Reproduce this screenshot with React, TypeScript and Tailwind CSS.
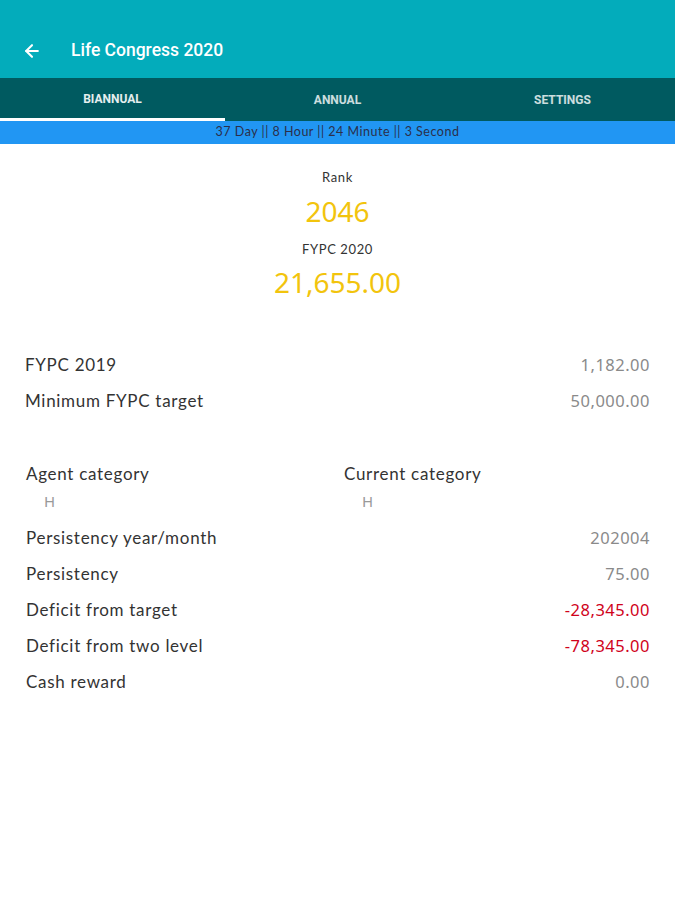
import { ArrowLeft } from 'lucide-react';

const rows1 = [
  { label: 'FYPC 2019', value: '1,182.00' },
  { label: 'Minimum FYPC target', value: '50,000.00' },
];

const rows2 = [
  { label: 'Persistency year/month', value: '202004' },
  { label: 'Persistency', value: '75.00' },
  { label: 'Deficit from target', value: '-28,345.00', red: true },
  { label: 'Deficit from two level', value: '-78,345.00', red: true },
  { label: 'Cash reward', value: '0.00' },
];

const labelFont = "font-['Lato','Open_Sans',sans-serif]";
const numFont = "font-['Noto_Sans','Open_Sans',sans-serif]";

const Row = ({ label, value, red }: { label: string; value: string; red?: boolean }) => (
  <div className="flex items-center justify-between h-9">
    <span className={`${labelFont} text-[17px] tracking-[0.7px] text-[#333]`}>{label}</span>
    <span className={`${numFont} text-[16.5px] tracking-[0.5px] ${red ? 'text-[#d0021b]' : 'text-[#8a8a8a]'}`}>{value}</span>
  </div>
);

export default function App() {
  return (
    <div className="w-[675px] h-[900px] bg-white">
      {/* Toolbar */}
      <div className="h-[78px] bg-[#03acbb] flex items-end pb-[17px] pl-[22px]">
        <ArrowLeft className="w-[20px] h-[20px] text-white" strokeWidth={2.5} />
        <span className="ml-[29px] text-white text-[17.5px] font-medium font-['Roboto',sans-serif] leading-[22px]">
          Life Congress 2020
        </span>
      </div>

      {/* Tabs */}
      <div className="h-[43px] bg-[#005a60] flex font-['Roboto',sans-serif] text-[12px] font-bold text-white/90 uppercase">
        <div className="w-1/3 flex flex-col">
          <div className="flex-1 flex items-center justify-center pt-[2px]">Biannual</div>
          <div className="h-[3px] bg-white"></div>
        </div>
        <div className="w-1/3 flex items-center justify-center text-white/80">Annual</div>
        <div className="w-1/3 flex items-center justify-center text-white/80">Settings</div>
      </div>

      {/* Countdown */}
      <div className={`h-[23px] bg-[#2196f3] flex items-center justify-center ${labelFont} text-[12.5px] tracking-[0.5px] text-[#2b2f4a]`}>
        37 Day || 8 Hour || 24 Minute || 3 Second
      </div>

      {/* Summary */}
      <div className="flex flex-col items-center pt-[24px]">
        <span className={`${labelFont} text-[13px] tracking-[0.6px] text-[#333] leading-[18px]`}>Rank</span>
        <span className={`${numFont} text-[28px] text-[#f2c40d] leading-[34px] mt-[8px]`}>2046</span>
        <span className={`${labelFont} text-[13px] tracking-[0.6px] text-[#333] leading-[18px] mt-[12px]`}>FYPC 2020</span>
        <span className={`${numFont} text-[28px] text-[#f2c40d] leading-[36px] mt-[6px]`}>21,655.00</span>
      </div>

      <div className="px-[25px] pt-[47px]">
        {rows1.map((r) => (
          <Row key={r.label} {...r} />
        ))}

        <div className="grid grid-cols-2 mt-[37px] pl-[1px]">
          <div>
            <div className={`${labelFont} text-[17px] tracking-[0.7px] text-[#333] h-9 flex items-center`}>Agent category</div>
            <div className={`${numFont} text-[15px] text-[#999] pl-[18px] -mt-[9px] leading-[36px]`}>H</div>
          </div>
          <div className="pl-[6px]">
            <div className={`${labelFont} text-[17px] tracking-[0.7px] text-[#333] h-9 flex items-center`}>Current category</div>
            <div className={`${numFont} text-[15px] text-[#999] pl-[18px] -mt-[9px] leading-[36px]`}>H</div>
          </div>
        </div>

        <div className="mt-[1px] pl-[1px]">
          {rows2.map((r) => (
            <Row key={r.label} {...r} />
          ))}
        </div>
      </div>
    </div>
  );
}
